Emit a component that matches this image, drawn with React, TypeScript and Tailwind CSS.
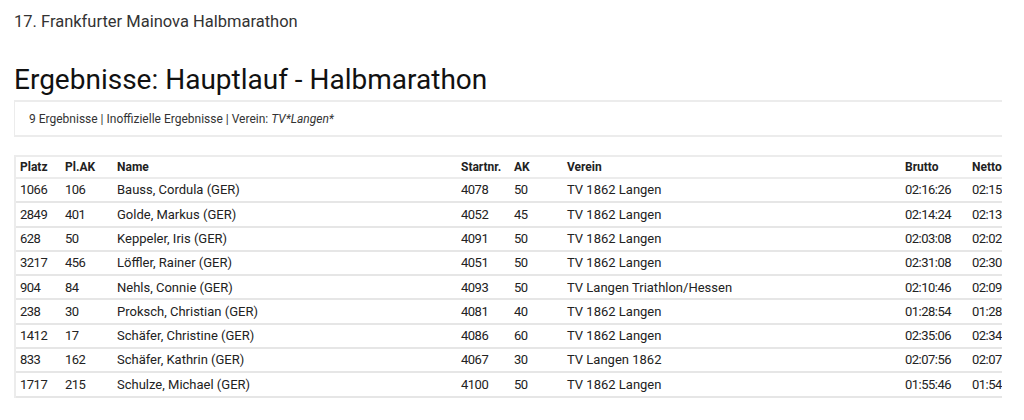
import React from "react";

const rows = [
  ["1066", "106", "Bauss, Cordula (GER)", "4078", "50", "TV 1862 Langen", "02:16:26", "02:15:12"],
  ["2849", "401", "Golde, Markus (GER)", "4052", "45", "TV 1862 Langen", "02:14:24", "02:13:30"],
  ["628", "50", "Keppeler, Iris (GER)", "4091", "50", "TV 1862 Langen", "02:03:08", "02:02:11"],
  ["3217", "456", "Löffler, Rainer (GER)", "4051", "50", "TV 1862 Langen", "02:31:08", "02:30:02"],
  ["904", "84", "Nehls, Connie (GER)", "4093", "50", "TV Langen Triathlon/Hessen", "02:10:46", "02:09:40"],
  ["238", "30", "Proksch, Christian (GER)", "4081", "40", "TV 1862 Langen", "01:28:54", "01:28:50"],
  ["1412", "17", "Schäfer, Christine (GER)", "4086", "60", "TV 1862 Langen", "02:35:06", "02:34:01"],
  ["833", "162", "Schäfer, Kathrin (GER)", "4067", "30", "TV Langen 1862", "02:07:56", "02:07:00"],
  ["1717", "215", "Schulze, Michael (GER)", "4100", "50", "TV 1862 Langen", "01:55:46", "01:54:40"],
];

const widths = [45, 52, 344, 53, 53, 338, 67, 80];
const heads = ["Platz", "Pl.AK", "Name", "Startnr.", "AK", "Verein", "Brutto", "Netto"];
const numeric = [true, true, false, true, true, false, true, true];

export default function App() {
  return (
    <div
      className="w-[1024px] h-[420px] overflow-hidden bg-white text-[#222]"
      style={{ fontFamily: "Roboto, 'Liberation Sans', sans-serif" }}
    >
      <div className="pl-[14px] pt-[10px]">
        <div className="text-[16.5px] leading-[24px] text-[#333]">17. Frankfurter Mainova Halbmarathon</div>
        <h1 className="mt-[29px] text-[28px] leading-[34px] font-normal text-[#111]">
          Ergebnisse: Hauptlauf - Halbmarathon
        </h1>
        <div className="w-[988px] overflow-hidden">
          <div className="mt-[3px] h-[37px] border-2 border-r-0 border-[#ececec] pl-[14px] flex items-center text-[12px] text-[#333] ml-[-1px]">
            <span>
              9 Ergebnisse | Inoffizielle Ergebnisse | Verein: <i>TV*Langen*</i>
            </span>
          </div>
          <div className="mt-[18px] border-l-2 border-[#ececec] w-[1036px]">
            <table className="table-fixed border-collapse text-[13px] w-[1032px]">
              <colgroup>
                {widths.map((w, i) => (
                  <col key={i} style={{ width: w }} />
                ))}
              </colgroup>
              <thead>
                <tr className="h-[22px] border-t-2 border-b-2 border-[#ececec]">
                  {heads.map((h) => (
                    <th key={h} className="text-left font-bold pl-[4px] text-[12px] text-[#222] align-middle">
                      {h}
                    </th>
                  ))}
                </tr>
              </thead>
              <tbody>
                {rows.map((r, i) => (
                  <tr key={i} className="h-[24.3px] border-b-2 border-[#e6e6e6]">
                    {r.map((c, j) => (
                      <td
                        key={j}
                        className={
                          numeric[j]
                            ? "pl-[4px] align-middle whitespace-nowrap overflow-hidden tracking-[-0.5px]"
                            : "pl-[4px] align-middle whitespace-nowrap overflow-hidden"
                        }
                      >
                        {c}
                      </td>
                    ))}
                  </tr>
                ))}
              </tbody>
            </table>
          </div>
        </div>
      </div>
    </div>
  );
}
